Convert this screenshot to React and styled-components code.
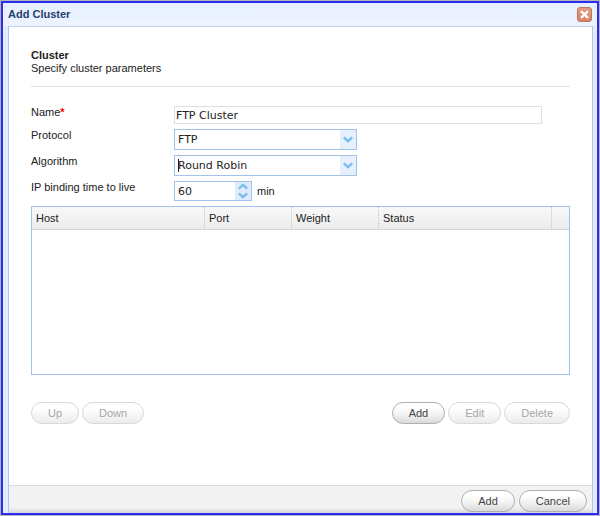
import { useState } from "react";
import styled, { createGlobalStyle } from "styled-components";

const columns = [
  { name: "Host", width: 173 },
  { name: "Port", width: 87 },
  { name: "Weight", width: 87 },
  { name: "Status", width: null },
];

const Chevron = ({ up }) => (
  <svg width="10" height="7" viewBox="0 0 10 7" aria-hidden="true">
    <path
      d={up ? "M0.8 5.6L5 1.8L9.2 5.6" : "M0.8 1.4L5 5.2L9.2 1.4"}
      fill="none"
      stroke="#78bcf0"
      strokeWidth="2.3"
    />
  </svg>
);

const ComboBox = ({ id, options, focused }) => (
  <Combo>
    <select id={id}>
      {options.map((option) => (
        <option key={option}>{option}</option>
      ))}
    </select>
    {focused && <Caret />}
    <Trigger>
      <Chevron />
    </Trigger>
  </Combo>
);

const App = () => {
  const [name, setName] = useState("FTP Cluster");
  const [ttl, setTtl] = useState(60);

  return (
    <>
      <GlobalStyle />
      <Window role="dialog" aria-labelledby="title">
        <TitleBar>
          <h1 id="title">Add Cluster</h1>
          <CloseButton type="button" aria-label="Close">
            <svg width="9" height="9" viewBox="0 0 9 9" aria-hidden="true">
              <path d="M1 1.2L8 7.8M8 1.2L1 7.8" stroke="#fff" strokeWidth="2.4" />
            </svg>
          </CloseButton>
        </TitleBar>
        <Panel>
          <Content>
            <Intro>
              <h2>Cluster</h2>
              <p>Specify cluster parameters</p>
            </Intro>
            <Field>
              <label htmlFor="name">
                Name<Required>*</Required>
              </label>
              <TextInput
                id="name"
                value={name}
                onChange={(e) => setName(e.target.value)}
              />
            </Field>
            <Field>
              <label htmlFor="protocol">Protocol</label>
              <ComboBox id="protocol" options={["FTP"]} />
            </Field>
            <Field>
              <label htmlFor="algorithm">Algorithm</label>
              <ComboBox id="algorithm" options={["Round Robin"]} focused />
            </Field>
            <Field>
              <label htmlFor="ttl">IP binding time to live</label>
              <Inline>
                <Spinner>
                  <input
                    id="ttl"
                    type="number"
                    value={ttl}
                    onChange={(e) => setTtl(Number(e.target.value))}
                  />
                  <SpinButtons>
                    <button
                      type="button"
                      aria-label="Increase"
                      onClick={() => setTtl(ttl + 1)}
                    >
                      <Chevron up />
                    </button>
                    <button
                      type="button"
                      aria-label="Decrease"
                      onClick={() => setTtl(ttl - 1)}
                    >
                      <Chevron />
                    </button>
                  </SpinButtons>
                </Spinner>
                <span>min</span>
              </Inline>
            </Field>
            <Grid>
              <HostTable>
                <thead>
                  <tr>
                    {columns.map((column) => (
                      <HeaderCell key={column.name} $width={column.width}>
                        {column.name}
                      </HeaderCell>
                    ))}
                    <HeaderCell as="td" $width={17} />
                  </tr>
                </thead>
                <tbody />
              </HostTable>
            </Grid>
            <Actions>
              <Button type="button" disabled>
                Up
              </Button>
              <Button type="button" disabled>
                Down
              </Button>
              <Spacer />
              <Button type="button">Add</Button>
              <Button type="button" disabled>
                Edit
              </Button>
              <Button type="button" disabled>
                Delete
              </Button>
            </Actions>
          </Content>
          <Footer>
            <Button type="button">Add</Button>
            <Button type="button">Cancel</Button>
          </Footer>
        </Panel>
      </Window>
    </>
  );
};

const GlobalStyle = createGlobalStyle`
  * {
    box-sizing: border-box;
  }

  body {
    margin: 0;
    background: #b4b4b0;
    color: #222;
    font: 11px/13px "Liberation Sans", Arial, sans-serif;
  }

  h1, h2, p {
    margin: 0;
  }

  input, select, button {
    margin: 0;
    outline: none;
    color: inherit;
    font: inherit;
  }
`;

const Window = styled.main`
  display: flex;
  flex-direction: column;
  min-height: calc(100vh - 2px);
  margin: 1px;
  border: 2px solid #2c2cf6;
  background: #e3ecfc;
`;

const TitleBar = styled.header`
  display: flex;
  align-items: center;
  justify-content: space-between;
  height: 23px;
  padding: 0 5px;
  background: linear-gradient(#e6eefe, #eef4ff);

  & h1 {
    color: #24406f;
    font-size: 11px;
    font-weight: bold;
  }
`;

const CloseButton = styled.button`
  display: flex;
  align-items: center;
  justify-content: center;
  width: 15px;
  height: 15px;
  padding: 0;
  border: 1px solid #bf7560;
  border-radius: 3px;
  background: linear-gradient(#e29a82, #d98467);
`;

const Panel = styled.div`
  display: flex;
  flex-direction: column;
  flex: 1;
  margin: 0 4px 0 5px;
  border: 1px solid #a9c8ee;
  border-top-color: #bad3f0;
  border-bottom: 0;
  background: #fff;
`;

const Content = styled.div`
  flex: 1;
  padding: 22px 22px 60px;
`;

const Intro = styled.div`
  margin-bottom: 19px;
  padding-bottom: 11px;
  border-bottom: 1px solid #e0e0e0;

  & h2 {
    font-size: 11px;
    font-weight: bold;
  }
`;

const Field = styled.div`
  display: grid;
  grid-template-columns: 143px 1fr;
  align-items: start;
  margin-bottom: 5px;
`;

const Required = styled.span`
  color: #f00;
  font-weight: bold;
`;

const TextInput = styled.input`
  width: calc(100% - 28px);
  height: 18px;
  padding: 0 1px;
  border: 1px solid #dfdfdf;
  font-family: "DejaVu Sans", sans-serif;
`;

const Combo = styled.div`
  position: relative;
  width: 183px;
  height: 21px;

  & select {
    width: 100%;
    height: 100%;
    padding: 0 20px 0 3px;
    border: 1px solid #a3c2ea;
    border-radius: 0;
    background: #fff;
    appearance: none;
    font-family: "DejaVu Sans", sans-serif;
  }
`;

const Trigger = styled.span`
  position: absolute;
  top: 1px;
  right: 1px;
  bottom: 1px;
  display: flex;
  align-items: center;
  justify-content: center;
  width: 16px;
  background: #e6f0fd;
  pointer-events: none;
`;

const Caret = styled.span`
  position: absolute;
  top: 4px;
  left: 4px;
  width: 1px;
  height: 13px;
  background: #222;
`;

const Inline = styled.div`
  display: flex;
  align-items: center;
  gap: 5px;
`;

const Spinner = styled.div`
  display: flex;
  width: 78px;
  height: 20px;
  border: 1px solid #a3c2ea;

  & input {
    flex: 1;
    min-width: 0;
    padding: 0 3px;
    border: 0;
    appearance: textfield;
    font-family: "DejaVu Sans", sans-serif;
  }

  & input::-webkit-inner-spin-button {
    appearance: none;
  }
`;

const SpinButtons = styled.div`
  display: flex;
  flex-direction: column;
  width: 16px;
  background: #dfeafc;

  & button {
    display: flex;
    flex: 1;
    align-items: center;
    justify-content: center;
    padding: 0;
    border: 0;
    background: none;
  }
`;

const Grid = styled.div`
  height: 169px;
  border: 1px solid #a3c2ea;
`;

const HostTable = styled.table`
  width: 100%;
  table-layout: fixed;
  border-collapse: separate;
  border-spacing: 0;
`;

const HeaderCell = styled.th`
  width: ${({ $width }) => ($width ? `${$width}px` : "auto")};
  height: 23px;
  padding: 0 4px;
  border-right: 1px dotted #c4c4c4;
  border-bottom: 1px solid #d5d5d5;
  background: linear-gradient(#f8f8f8, #ececec);
  font-weight: normal;
  text-align: left;

  &:last-child {
    border-right: 0;
  }
`;

const Actions = styled.div`
  display: flex;
  gap: 3px;
  margin-top: 27px;
`;

const Spacer = styled.div`
  flex: 1;
`;

const Button = styled.button`
  height: 22px;
  padding: 0 16px;
  border: 1px solid #b0b0b0;
  border-radius: 11px;
  background: linear-gradient(#fff 20%, #f4f4f4 55%, #d9d9d9);
  color: #444;

  &:disabled {
    border-color: #d9d9d9;
    background: linear-gradient(#fff 30%, #ebebeb);
    color: #a6a6a6;
  }
`;

const Footer = styled.footer`
  display: flex;
  justify-content: flex-end;
  gap: 4px;
  height: 28px;
  padding: 4px 5px 0;
  border-top: 1px solid #dcdcdc;
  background: linear-gradient(#f2f2f2 80%, #d8d8d8);
`;

export default App;
